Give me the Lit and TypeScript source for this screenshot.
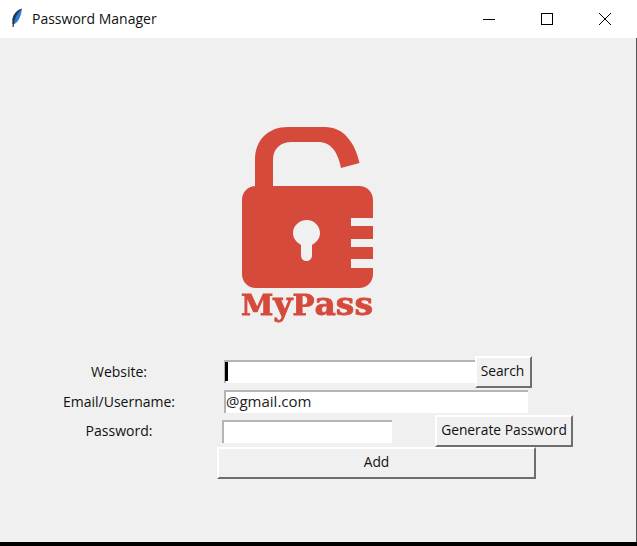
import { LitElement, html, css } from 'lit'
import { customElement } from 'lit/decorators.js'

@customElement('app-root')
export class AppRoot extends LitElement {
  static styles = css`
    :host {
      display: block;
      height: 546px;
      background: #000;
      font-family: 'Open Sans', 'Noto Sans', sans-serif;
      font-size: 14px;
      color: #111;
      overflow: hidden;
    }

    .titlebar {
      height: 38px;
      background: #fff;
      display: flex;
      align-items: center;
      font-size: 14px;
      padding-right: 3px;
    }

    .titlebar__icon {
      width: 16px;
      height: 22px;
      margin-left: 8px;
      margin-right: 8px;
    }

    .titlebar__text {
      flex: 1;
      padding-bottom: 1px;
    }

    .titlebar__btn {
      width: 58px;
      height: 38px;
      display: flex;
      align-items: center;
      justify-content: center;
    }

    .main {
      height: 504px;
      background: #f0f0f0;
      display: flex;
      flex-direction: column;
      box-sizing: border-box;
      border-right: 1px solid #555;
    }

    .logo {
      display: block;
      width: 142px;
      height: 206px;
      margin: 82px 0 30px 236px;
      filter: blur(0.4px);
    }

    .logo__text {
      font-family: 'DejaVu Serif', serif;
      font-weight: 700;
      font-size: 31px;
      fill: #d64a3c;
      stroke: #d64a3c;
      stroke-width: 0.8px;
    }

    .logo__cap {
      font-size: 27.5px;
    }

    .row {
      display: flex;
      align-items: center;
      padding-left: 62px;
    }

    .row--1 {
      height: 32px;
    }

    .row--2 {
      height: 23px;
      margin-top: 2px;
    }

    .row--3 {
      height: 32px;
      margin-top: 2px;
    }

    .row--4 {
      height: 32px;
    }

    .label {
      width: 114px;
      text-align: center;
      white-space: nowrap;
    }

    .label--up {
      padding-bottom: 2px;
    }

    .entry {
      height: 23px;
      box-sizing: border-box;
      background: #fff;
      border-top: 2px solid #b4b4b4;
      border-left: 2px solid #b4b4b4;
      display: flex;
      align-items: center;
      font-size: 15px;
      color: #222;
      padding: 0 0 2px 0;
    }

    .entry--website {
      width: 251px;
      margin-left: 48px;
      margin-bottom: 1px;
    }

    .entry--email {
      width: 304px;
      margin-left: 48px;
      padding-bottom: 4px;
    }

    .entry--password {
      width: 170px;
      margin-left: 46px;
    }

    .caret {
      width: 3px;
      height: 19px;
      background: #000;
      margin-left: -1px;
    }

    .btn {
      box-sizing: border-box;
      height: 32px;
      padding: 0 0 3px;
      background: #f0f0f0;
      border-style: solid;
      border-width: 2px;
      border-color: #fff #6e6e6e #6e6e6e #fff;
      font: inherit;
      font-size: 13.8px;
      color: inherit;
      white-space: nowrap;
    }

    .btn--search {
      width: 57px;
      padding-right: 2px;
    }

    .btn--generate {
      width: 138px;
      margin-left: 43px;
    }

    .btn--add {
      width: 319px;
      margin-left: 155px;
    }
  `

  render() {
    return html`
      <div class="titlebar">
        <svg class="titlebar__icon" viewBox="0 0 16 22">
          <path d="M14 0.5 C9 2 5.5 6 4.5 11 L4.5 16 L6.5 16 C10 14 13 9 14 0.5 Z" fill="#2f7ad0" />
          <path d="M14 0.5 C9 2 5.5 6 4.5 11 L4.5 16 L6 16 C6.5 10 9.5 5 14 0.5 Z" fill="#24384f" />
          <path d="M5.5 15 L5 19" stroke="#333" stroke-width="1.2" fill="none" />
        </svg>
        <div class="titlebar__text">Password Manager</div>
        <div class="titlebar__btn">
          <svg width="14" height="14" viewBox="0 0 14 14">
            <path d="M1 7.5H13" stroke="#000" fill="none" />
          </svg>
        </div>
        <div class="titlebar__btn">
          <svg width="14" height="14" viewBox="0 0 14 14">
            <rect x="1.5" y="1.5" width="11" height="11" stroke="#000" fill="none" />
          </svg>
        </div>
        <div class="titlebar__btn">
          <svg width="14" height="14" viewBox="0 0 14 14">
            <path d="M1 1L13 13M13 1L1 13" stroke="#000" fill="none" />
          </svg>
        </div>
      </div>
      <div class="main">
        <svg class="logo" viewBox="236 120 142 206">
          <path
            d="M255 187 V160 C255 140 268 127 288 127 H325 C343 127 355 142 359.5 163 L341 168 C338 152 331 142 318 142 H292 C280 142 273 149 273 160 V187 Z"
            fill="#d64a3c"
          />
          <path
            fill-rule="evenodd"
            fill="#d64a3c"
            d="M256 186 H359 C367 186 373 192 373 200 V218 H351 V226 H373 V239 H351 V247 H373 V259 H351 V268 H373 V274 C373 282 367 288 359 288 H256 C248 288 242 282 242 274 V200 C242 192 248 186 256 186 Z
               M307 220 C299 220 293 226 293 233 C293 238 296 242 301 245 V255 C301 263 312 263 312 255 V245 C317 242 320 238 320 233 C320 226 314 220 307 220 Z"
          />
          <text class="logo__text" x="241" y="315" textLength="132" lengthAdjust="spacingAndGlyphs"><tspan class="logo__cap">M</tspan>y<tspan class="logo__cap">P</tspan>ass</text>
        </svg>
        <div class="row row--1">
          <div class="label label--up">Website:</div>
          <div class="entry entry--website"><span class="caret"></span></div>
          <button class="btn btn--search">Search</button>
        </div>
        <div class="row row--2">
          <div class="label">Email/Username:</div>
          <div class="entry entry--email">@gmail.com</div>
        </div>
        <div class="row row--3">
          <div class="label label--up">Password:</div>
          <div class="entry entry--password"></div>
          <button class="btn btn--generate">Generate Password</button>
        </div>
        <div class="row row--4">
          <button class="btn btn--add">Add</button>
        </div>
      </div>
    `
  }
}
